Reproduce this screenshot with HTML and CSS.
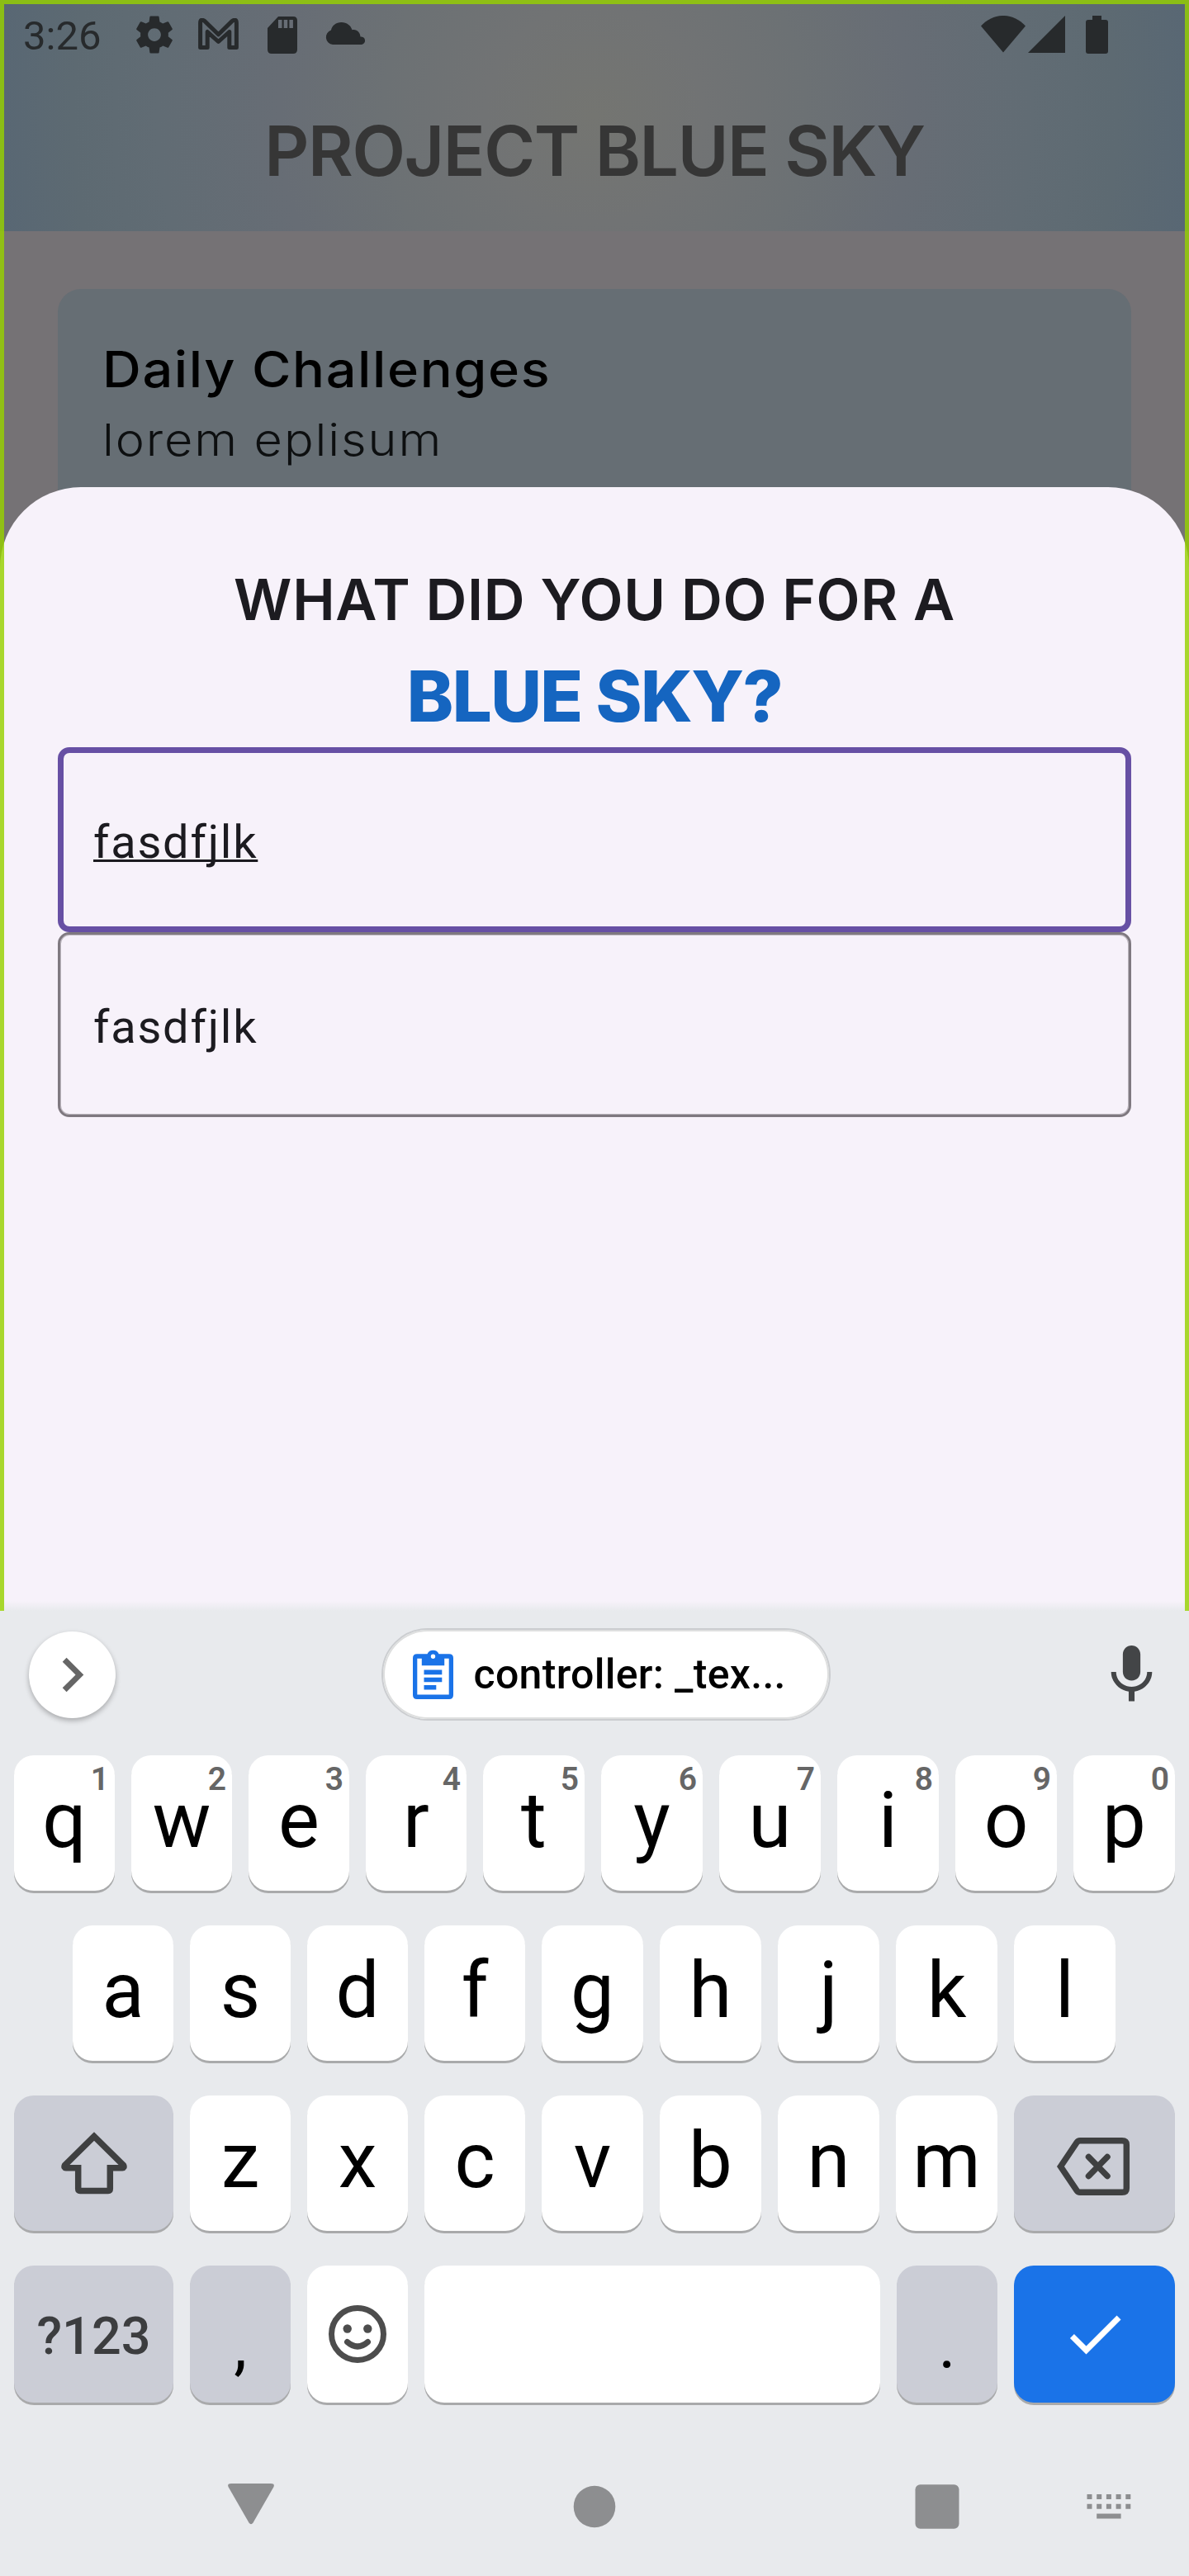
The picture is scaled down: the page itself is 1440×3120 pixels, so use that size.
FILE: index.html
```html
<!DOCTYPE html>
<html lang="en">
<head>
<meta charset="utf-8">
<title>Project Blue Sky</title>
<link rel="stylesheet" href="styles.css">
</head>
<body>
<div class="screen">
  <main class="app">
    <header class="header">
      <div class="status">
        <span class="clock">3:26</span>
        <svg class="s-gear" width="54" height="54" viewBox="0 0 24 24"><path d="M19.43 12.98c.04-.32.07-.64.07-.98s-.03-.66-.07-.98l2.11-1.65c.19-.15.24-.42.12-.64l-2-3.46c-.12-.22-.39-.3-.61-.22l-2.49 1c-.52-.4-1.08-.73-1.69-.98l-.38-2.65C14.46 2.18 14.25 2 14 2h-4c-.25 0-.46.18-.49.42l-.38 2.65c-.61.25-1.17.59-1.69.98l-2.49-1c-.23-.09-.49 0-.61.22l-2 3.46c-.13.22-.07.49.12.64l2.11 1.65c-.04.32-.07.65-.07.98s.03.66.07.98l-2.11 1.65c-.19.15-.24.42-.12.64l2 3.46c.12.22.39.3.61.22l2.49-1c.52.4 1.08.73 1.69.98l.38 2.65c.03.24.24.42.49.42h4c.25 0 .46-.18.49-.42l.38-2.65c.61-.25 1.17-.59 1.69-.98l2.49 1c.23.09.49 0 .61-.22l2-3.46c.12-.22.07-.49-.12-.64l-2.11-1.65zM12 15.5c-1.93 0-3.5-1.57-3.5-3.5s1.57-3.5 3.5-3.5 3.5 1.57 3.5 3.5-1.57 3.5-3.5 3.5z"/></svg>
        <svg class="s-mail" width="49" height="38" viewBox="0 0 49 38"><path d="M2.6 35.4V6Q2.6 0 8 3.6L24.5 19.8 41 3.6Q46.400 0 46.400 6V35.4H37.800V16.500L24.500 28.500 11.200 16.500V35.400Z" fill="none" stroke="#272a2c" stroke-width="5" stroke-linejoin="round"/></svg>
        <svg class="s-sd" width="36" height="45" viewBox="0 0 36 45"><path fill-rule="evenodd" d="M13 0H31Q36 0 36 5V40Q36 45 31 45H5Q0 45 0 40V14ZM13 4V14H17.500V4ZM19.700 4V14H24.200V4ZM26.400 4V14H30.900V4Z"/></svg>
        <svg class="s-cloud" width="49" height="27" viewBox="0 0 49 27"><path d="M9 27A9 9 0 0 1 7 9.500C8 4 13 0 19.500 0 26 0 31 4 32.500 9.300 38 8 42 12 42.500 17.500A4.800 4.800 0 0 1 44 27Z"/></svg>
        <svg class="s-wifi" width="54" height="45" viewBox="0 0 54 45"><path d="M0 12.500C15-4.200 39-4.200 54 12.500L27 44.500Z"/></svg>
        <svg class="s-cell" width="45" height="45" viewBox="0 0 45 45"><path d="M45 0V45H0Z"/></svg>
        <svg class="s-batt" width="27" height="46" viewBox="0 0 27 46"><path d="M8 0H19V5H24Q27 5 27 8V43Q27 46 24 46H3Q0 46 0 43V8Q0 5 3 5H8Z"/></svg>
      </div>
      <h1 class="title">PROJECT BLUE SKY</h1>
    </header>
    <section class="content">
      <article class="card">
        <h2 class="card-title">Daily Challenges</h2>
        <p class="card-text">lorem eplisum</p>
      </article>
    </section>
    <section class="sheet">
      <p class="question">WHAT DID YOU DO FOR A</p>
      <p class="highlight">BLUE SKY?</p>
      <div class="field focused"><span class="composing">fasdfjlk</span></div>
      <div class="field"><span>fasdfjlk</span></div>
    </section>
    <div class="frame"></div>
  </main>

  <section class="keyboard">
    <div class="toolbar">
      <div class="expand"><svg width="83" height="83" viewBox="0 0 24 24"><path d="M10 6L8.590 7.410 13.170 12l-4.580 4.590L10 18l6-6z"/></svg></div>
      <div class="chip">
        <svg width="49" height="60" viewBox="0 0 49 60"><path fill="#1a73e8" fill-rule="evenodd" d="M5 5.300H17.500A7.700 7.700 0 0 1 31.500 5.300H44Q49 5.300 49 10.300V55Q49 60 44 60H5Q0 60 0 55V10.300Q0 5.300 5 5.300ZM5.300 10.800V54.600H43.700V10.800H38.200V19.300H10.800V10.800ZM24.500 5.500A2.700 2.700 0 1 0 24.500 10.900 2.700 2.700 0 1 0 24.500 5.500Z"/><path fill="#1a73e8" d="M13.500 24.600H35.300V30.200H13.500ZM13.500 33.700H35.300V39.300H13.500ZM13.500 42.900H28.300V48.500H13.500Z"/></svg>
        <span>controller: _tex...</span>
      </div>
      <svg class="mic" width="85" height="85" viewBox="0 0 24 24"><path d="M12 14c1.660 0 3-1.340 3-3V5c0-1.660-1.340-3-3-3S9 3.340 9 5v6c0 1.660 1.340 3 3 3zM17.300 11c0 3-2.540 5.100-5.300 5.100S6.700 14 6.700 11H5c0 3.410 2.720 6.230 6 6.720V21h2v-3.280c3.280-.48 6-3.300 6-6.720z"/></svg>
    </div>
    <div class="row row1">
      <div class="key">q<sup>1</sup></div><div class="key">w<sup>2</sup></div><div class="key">e<sup>3</sup></div><div class="key">r<sup>4</sup></div><div class="key">t<sup>5</sup></div><div class="key">y<sup>6</sup></div><div class="key">u<sup>7</sup></div><div class="key">i<sup>8</sup></div><div class="key">o<sup>9</sup></div><div class="key">p<sup>0</sup></div>
    </div>
    <div class="row row2">
      <div class="key">a</div><div class="key">s</div><div class="key">d</div><div class="key">f</div><div class="key">g</div><div class="key">h</div><div class="key">j</div><div class="key">k</div><div class="key">l</div>
    </div>
    <div class="row row3">
      <div class="key mod icon"><svg width="80" height="76" viewBox="0 0 80 76"><path d="M40 5.500L4.500 40.500Q3 43.500 6 43.700H20.700V69Q20.700 71.400 23 71.400H57Q59.300 71.400 59.300 69V43.700H74Q77 43.500 75.500 40.500Z" fill="none" stroke="#3f4041" stroke-width="7.500"/></svg></div>
      <div class="key">z</div><div class="key">x</div><div class="key">c</div><div class="key">v</div><div class="key">b</div><div class="key">n</div><div class="key">m</div>
      <div class="key mod icon"><svg class="bksp" width="90" height="72" viewBox="0 0 90 72"><path d="M5.500 36L25 7Q26.500 4.700 29 4.700H80Q85.300 4.700 85.300 9.500V62.500Q85.300 67.300 80 67.300H29Q26.500 67.300 25 65ZM39.500 24.500L62 47.500M62 24.500L39.500 47.500" fill="none" stroke="#3f4041" stroke-width="7.500" stroke-linecap="round"/></svg></div>
    </div>
    <div class="row row4">
      <div class="key mod symbols">?123</div>
      <div class="key mod punct">,</div>
      <div class="key icon"><svg width="72" height="72" viewBox="0 0 72 72"><g fill="none" stroke="#4d4d4d" stroke-width="7"><circle cx="36" cy="36" r="31.500"/><path d="M23.500 45.500Q36 56.500 48.500 45.500" stroke-linecap="round"/></g><g fill="#4d4d4d"><circle cx="23.700" cy="29.500" r="5.200"/><circle cx="48.300" cy="29.500" r="5.200"/></g></svg></div>
      <div class="key"></div>
      <div class="key mod punct">.</div>
      <div class="key enter icon"><svg width="84" height="84" viewBox="0 0 24 24"><path fill="#fff" d="M9 16.170L4.830 12l-1.420 1.410L9 19 21 7l-1.410-1.410z"/></svg></div>
    </div>
    <nav class="nav">
      <svg class="n-back" width="56" height="50" viewBox="0 0 56 50"><path d="M4 0H52Q57 0 55.500 4L30.500 47.500Q28 51 25.500 47.500L.5 4Q-1 0 4 0Z"/></svg>
      <svg class="n-home" width="52" height="52" viewBox="0 0 52 52"><circle cx="26" cy="26" r="25.300"/></svg>
      <svg class="n-recent" width="54" height="54" viewBox="0 0 54 54"><rect x=".5" y=".3" width="53" height="53.400" rx="6"/></svg>
      <svg class="n-ime" width="54" height="30" viewBox="0 0 54 30"><path d="M.5 0h6v6h-6zM12.200 0h6v6h-6zM23.900 0h6v6h-6zM35.600 0h6v6h-6zM47.300 0h6v6h-6zM.5 11.700h6v6h-6zM12.200 11.700h6v6h-6zM23.900 11.700h6v6h-6zM35.600 11.700h6v6h-6zM47.300 11.700h6v6h-6zM12.200 23.500h29.400v6H12.200z"/></svg>
    </nav>
  </section>
</div>
</body>
</html>
```
FILE: styles.css
```css
* { box-sizing: border-box; margin: 0; padding: 0; }
body { background: #e8eaed; }
svg { display: block; flex: none; }

.screen { width: 1440px; height: 3120px; overflow: hidden; font-family: Roboto, sans-serif; background: #e8eaed; }

/* app behind the dimming scrim */
.app { position: relative; height: 1951px; background: #757275; overflow: hidden; }
.header {
  height: 280px;
  background: radial-gradient(circle 735px at 720px 140px, #747571 0%, #717374 18%, #6c7174 35%, #676d75 52%, #616c74 72%, #5d6a72 86%, #586774 100%);
}
.status { display: flex; align-items: flex-start; height: 133px; padding-left: 28px; fill: #272a2c; }
.clock { width: 132px; padding-top: 15px; font-size: 49px; line-height: 58px; color: #272a2c; }
.s-gear { margin-top: 15px; }
.s-mail { margin: 22px 0 0 26px; }
.s-sd { margin: 20px 0 0 35px; }
.s-cloud { margin: 27px 0 0 34px; }
.s-wifi { margin: 19px 0 0 745px; }
.s-cell { margin: 19px 0 0 3px; }
.s-batt { margin: 19px 0 0 25px; }
.title { font: 600 84px/100px Inter, sans-serif; letter-spacing: -1.400px; text-align: center; color: #363636; white-space: nowrap; }

.content { height: 410px; padding: 70px 70px 0; }
.card { height: 340px; padding: 61px 54px 0; border-radius: 28px; background: #666e74; }
.card-title { font: 450 60px/72px Inter, sans-serif; letter-spacing: 1.500px; color: #000; white-space: nowrap; transform: scaleX(1.08); transform-origin: left; }
.card-text { margin-top: 17px; font: 300 54px/66px Inter, sans-serif; letter-spacing: 1.700px; color: #0d0f10; white-space: nowrap; transform: scaleX(1.1); transform-origin: left; }

/* bottom sheet */
.sheet { position: relative; height: 1361px; margin-top: -100px; padding: 94px 70px 0; border-radius: 98px 98px 0 0; background: #f7f2fa; }
.question { font: 600 69px/84px Inter, sans-serif; letter-spacing: .7px; text-align: center; color: #1c1b20; white-space: nowrap; }
.highlight { margin-top: 24px; height: 113px; font: 800 85px/103px Inter, sans-serif; letter-spacing: -1.600px; text-align: center; color: #1565c0; white-space: nowrap; }
.field { display: flex; align-items: center; height: 224px; padding: 6px 0 0 40px; border: 3px solid #7f7980; border-radius: 14px; box-shadow: inset 0 0 0 1px rgba(127, 121, 128, .5); font-size: 56px; line-height: 66px; letter-spacing: 1.750px; color: #1c1b20; }
.field.focused { padding-left: 36px; border: 7px solid #6750a4; box-shadow: none; }
.composing { text-decoration: underline; text-decoration-skip-ink: none; text-decoration-thickness: 3px; text-underline-offset: 2px; }
.frame { position: absolute; inset: 0; border: 5px solid rgba(150, 209, 0, .82); border-bottom: 0; background: linear-gradient(rgba(232, 234, 237, 0), #e8eaed) bottom / 100% 12px no-repeat; background-clip: padding-box; }

/* keyboard */
.keyboard { height: 1169px; }
.toolbar { display: flex; align-items: center; height: 154px; padding: 0 27.500px 0 35px; }
.expand { display: flex; align-items: center; justify-content: center; width: 105px; height: 105px; border-radius: 50%; background: #fff; box-shadow: 0 3px 6px rgba(0, 0, 0, .28); fill: #666; }
.chip { display: flex; align-items: center; width: 544px; height: 112px; margin-left: 321.500px; padding-left: 36px; border: 2px solid #cbcdd0; border-radius: 56px; background: #fff; box-shadow: inset 0 0 0 2px #dedfdf; font-size: 50px; font-weight: 500; letter-spacing: .3px; white-space: nowrap; }
.chip span { margin-left: 25px; }
.mic { margin-left: auto; fill: #434547; }

.row { display: grid; gap: 20px; height: 164px; margin-bottom: 42px; }
.row1 { margin-top: 21px; padding-left: 17px; grid-template-columns: repeat(4, 122px) repeat(6, 123px); }
.row2 { padding-left: 88px; grid-template-columns: repeat(4, 122px) repeat(5, 123px); }
.row3 { padding-left: 17px; grid-template-columns: 193px repeat(3, 122px) repeat(4, 123px) 195px; }
.row4 { height: 166px; padding-left: 17px; grid-template-columns: 193px 122px 122px 552px 122px 195px; margin-bottom: 0; }
.key { position: relative; display: flex; align-items: center; justify-content: center; padding-bottom: 6px; border-radius: 24px; background: #fff; box-shadow: 0 3px 0 #a9aaab; font-size: 94px; line-height: 110px; color: #000; }
.key sup { position: absolute; top: 6px; right: 7px; font-size: 39px; font-weight: 600; line-height: 46px; color: #666; }
.key.icon { padding: 0; }
.key.mod { background: #cbcdd6; }
.key.enter { background: #1a73e8; }
.key.symbols { padding: 5px 0 0; font-size: 63px; font-weight: 500; color: #3c3d3f; }
.key.punct { padding: 27px 0 0; font-size: 80px; }
.bksp { margin: 7px 4px 0 0; }

.nav { display: flex; align-items: flex-start; height: 210px; padding: 98px 0 0 276px; fill: #8d8e90; }
.n-home { margin: 2px 0 0 362px; }
.n-recent { margin: 1px 0 0 362px; }
.n-ime { margin: 13px 0 0 154px; }
```
